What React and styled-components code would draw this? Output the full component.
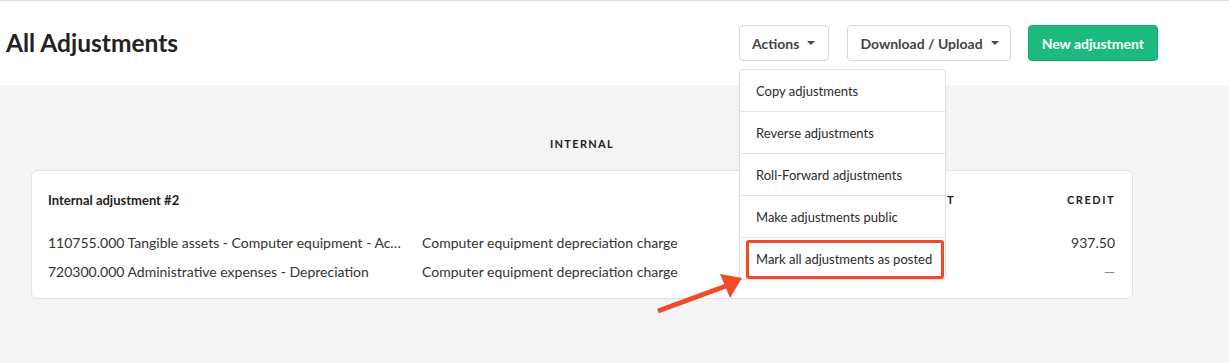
import React from "react";
import styled, { createGlobalStyle } from "styled-components";

const Global = createGlobalStyle`
  html, body { margin: 0; padding: 0; background: #f4f4f4; }
  body { font-family: Lato, "Open Sans", sans-serif; color: #2b2b2b; }
  * { box-sizing: border-box; }
`;

const Page = styled.div`
  position: relative;
  width: 1229px;
  height: 363px;
  overflow: hidden;
  background: #f4f4f4;
`;

const Header = styled.header`
  height: 85px;
  background: #fff;
  border-top: 1px solid #dcdcdc;
  display: flex;
  align-items: center;
  justify-content: space-between;
  padding: 0 71px 0 6px;
`;

const Title = styled.h1`
  margin: 0;
  font-size: 24.5px;
  font-weight: 700;
  color: #222;
  padding-bottom: 2px;
`;

const Toolbar = styled.div`
  display: flex;
  align-items: center;
  gap: 17px;
`;

const MenuWrap = styled.div`
  position: relative;
  margin-right: 1px;
`;

const Button = styled.button`
  height: 36px;
  display: inline-flex;
  align-items: center;
  gap: 8px;
  padding: ${(p) => (p.$primary ? "0 13px" : `0 ${p.$padR || 11}px 0 12px`)};
  border-radius: 4px;
  border: 1px solid ${(p) => (p.$primary ? "#17a673" : "#d6d6d6")};
  background: ${(p) => (p.$primary ? "#1dba80" : "#fff")};
  color: ${(p) => (p.$primary ? "#fff" : "#444")};
  font-family: Lato, sans-serif;
  font-size: 14px;
  font-weight: 700;
  cursor: pointer;
`;

const Caret = styled.span`
  width: 0;
  height: 0;
  border-left: 4px solid transparent;
  border-right: 4px solid transparent;
  border-top: 4px solid #444;
`;

const Menu = styled.ul`
  position: absolute;
  top: 44px;
  left: 0;
  width: 207px;
  margin: 0;
  padding: 0;
  list-style: none;
  background: #fff;
  border: 1px solid #e0e0e0;
  border-radius: 4px;
  box-shadow: 0 1px 3px rgba(0, 0, 0, 0.06);
  z-index: 5;
`;

const MenuItem = styled.li`
  position: relative;
  height: ${(p) => (p.$first ? "41px" : "42px")};
  display: flex;
  align-items: center;
  padding-left: 16px;
  font-size: 13px;
  color: #2b2b2b;
  border-top: ${(p) => (p.$first ? "none" : "1px solid #e4e4e4")};
  ${(p) =>
    p.$highlight &&
    `
    &::after {
      content: "";
      position: absolute;
      left: 6px;
      right: 1px;
      top: 2px;
      bottom: 0px;
      border: 3px solid #f04a28;
      border-radius: 3px;
    }
  `}
`;

const Main = styled.main`
  padding: 0 96px 0 31px;
`;

const SectionTitle = styled.div`
  text-align: center;
  font-size: 11px;
  font-weight: 700;
  letter-spacing: 1.3px;
  color: #222;
  padding-top: 52px;
  height: 85px;
`;

const Card = styled.section`
  background: #fff;
  border: 1px solid #e3e3e3;
  border-radius: 6px;
  padding: 20px 17px 16px 16px;
  height: 129px;
`;

const Grid = styled.div`
  display: grid;
  grid-template-columns: 358px 1fr 200px 144px;
  column-gap: 16px;
  align-items: center;
`;

const HeadCell = styled.div`
  font-size: ${(p) => (p.$caps ? "11px" : "13px")};
  font-weight: 700;
  letter-spacing: ${(p) => (p.$caps ? "1.5px" : "0")};
  text-align: ${(p) => (p.$right ? "right" : "left")};
  color: #222;
  height: 18px;
  line-height: 18px;
  margin-bottom: 19px;
`;

const Cell = styled.div`
  font-size: 14px;
  height: 29px;
  line-height: 17px;
  padding-top: 6px;
  white-space: nowrap;
  overflow: hidden;
  text-overflow: ellipsis;
  text-align: ${(p) => (p.$right ? "right" : "left")};
  color: ${(p) => (p.$muted ? "#888" : "#333")};
`;

const Arrow = styled.svg`
  position: absolute;
  left: 650px;
  top: 270px;
  z-index: 6;
`;

const rows = [
  {
    account: "110755.000 Tangible assets - Computer equipment - Accumulated depreciation",
    desc: "Computer equipment depreciation charge",
    debit: "",
    credit: "937.50",
  },
  {
    account: "720300.000 Administrative expenses - Depreciation",
    desc: "Computer equipment depreciation charge",
    debit: "",
    credit: "—",
  },
];

const menuItems = [
  "Copy adjustments",
  "Reverse adjustments",
  "Roll-Forward adjustments",
  "Make adjustments public",
  "Mark all adjustments as posted",
];

export default function App() {
  return (
    <Page>
      <Global />
      <Header>
        <Title>All Adjustments</Title>
        <Toolbar>
          <MenuWrap>
            <Button $padR={13}>
              Actions <Caret />
            </Button>
            <Menu>
              {menuItems.map((m, i) => (
                <MenuItem key={m} $first={i === 0} $highlight={i === menuItems.length - 1}>
                  {m}
                </MenuItem>
              ))}
            </Menu>
          </MenuWrap>
          <Button $padR={11}>
            Download / Upload <Caret />
          </Button>
          <Button $primary>New adjustment</Button>
        </Toolbar>
      </Header>
      <Main>
        <SectionTitle>INTERNAL</SectionTitle>
        <Card>
          <Grid>
            <HeadCell>Internal adjustment #2</HeadCell>
            <HeadCell />
            <HeadCell $caps $right>DEBIT</HeadCell>
            <HeadCell $caps $right>CREDIT</HeadCell>
            {rows.map((r) => (
              <React.Fragment key={r.account}>
                <Cell>{r.account}</Cell>
                <Cell>{r.desc}</Cell>
                <Cell $right>{r.debit}</Cell>
                <Cell $right $muted={r.credit === "—"}>{r.credit}</Cell>
              </React.Fragment>
            ))}
          </Grid>
        </Card>
      </Main>
      <Arrow width="100" height="50" viewBox="0 0 100 50">
        <line x1="8" y1="41" x2="76" y2="16" stroke="#f04a28" strokeWidth="5" strokeLinecap="butt" />
        <polygon points="92,8 70,4 80,28" fill="#f04a28" />
      </Arrow>
    </Page>
  );
}
